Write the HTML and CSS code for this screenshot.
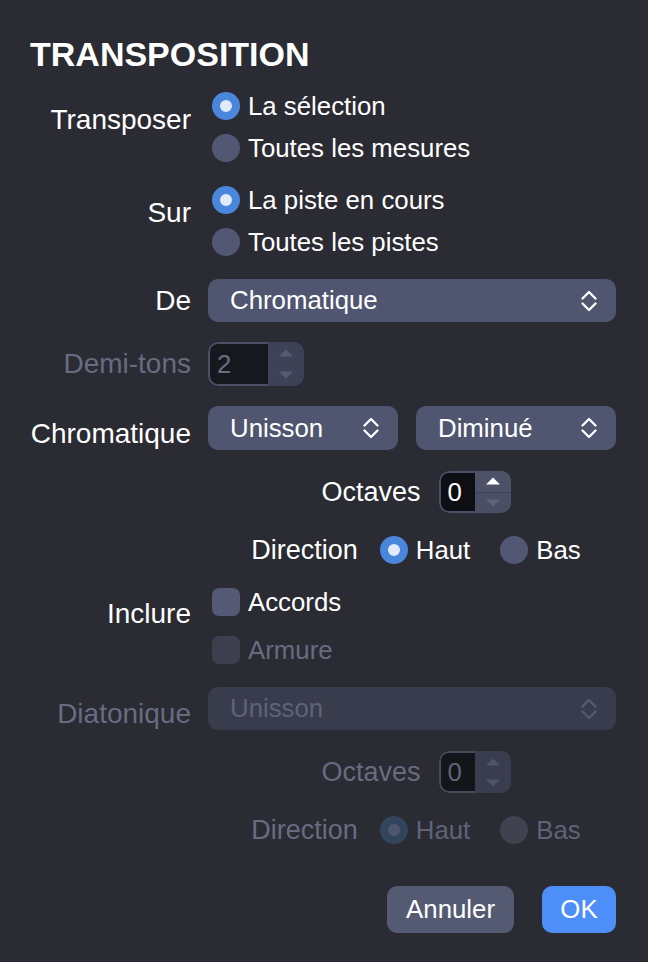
FILE: index.html
```html
<!DOCTYPE html>
<html lang="fr">
<head>
<meta charset="utf-8">
<title>Transposition</title>
<link rel="stylesheet" href="styles.css">
</head>
<body>
<div class="dialog">
  <h1 class="title">TRANSPOSITION</h1>

  <div class="row group g-transposer">
    <div class="label lab-transposer">Transposer</div>
    <div class="ctrl">
      <div class="opt"><span class="radio on"></span><span>La sélection</span></div>
      <div class="opt"><span class="radio"></span><span>Toutes les mesures</span></div>
    </div>
  </div>

  <div class="row group g-sur">
    <div class="label lab-sur">Sur</div>
    <div class="ctrl">
      <div class="opt"><span class="radio on"></span><span>La piste en cours</span></div>
      <div class="opt"><span class="radio"></span><span>Toutes les pistes</span></div>
    </div>
  </div>

  <div class="row centered r-de">
    <div class="label">De</div>
    <div class="ctrl">
      <div class="select">
        <span>Chromatique</span>
        <svg class="chev" width="16" height="26" viewBox="0 0 16 26"><polyline points="1.5,10.5 8,4 14.5,10.5"/><polyline points="1.5,15.5 8,22 14.5,15.5"/></svg>
      </div>
    </div>
  </div>

  <div class="row centered r-demi">
    <div class="label dis">Demi-tons</div>
    <div class="ctrl">
      <div class="stepper st-demi disabled">
        <div class="field">2</div>
        <div class="arrows">
          <span><svg width="16" height="8" viewBox="0 0 16 8"><polygon points="1,7.5 8,0.5 15,7.5"/></svg></span>
          <span><svg width="16" height="8" viewBox="0 0 16 8"><polygon points="1,0.5 8,7.5 15,0.5"/></svg></span>
        </div>
      </div>
    </div>
  </div>

  <div class="row fixed r-chrom">
    <div class="label tall55">Chromatique</div>
    <div class="ctrl pair">
      <div class="select sel-a">
        <span>Unisson</span>
        <svg class="chev" width="16" height="26" viewBox="0 0 16 26"><polyline points="1.5,10.5 8,4 14.5,10.5"/><polyline points="1.5,15.5 8,22 14.5,15.5"/></svg>
      </div>
      <div class="select sel-b">
        <span>Diminué</span>
        <svg class="chev" width="16" height="26" viewBox="0 0 16 26"><polyline points="1.5,10.5 8,4 14.5,10.5"/><polyline points="1.5,15.5 8,22 14.5,15.5"/></svg>
      </div>
    </div>
  </div>

  <div class="sub r-oct1">
    <span class="sublabel oct-label">Octaves</span>
    <div class="stepper st-oct">
      <div class="field">0</div>
      <div class="arrows">
        <span class="up-on"><svg width="16" height="8" viewBox="0 0 16 8"><polygon points="1,7.5 8,0.5 15,7.5"/></svg></span>
        <span class="down-off"><svg width="16" height="8" viewBox="0 0 16 8"><polygon points="1,0.5 8,7.5 15,0.5"/></svg></span>
      </div>
    </div>
  </div>

  <div class="sub r-dir1">
    <span class="sublabel dir-label">Direction</span>
    <div class="opt"><span class="radio on"></span><span>Haut</span></div>
    <div class="opt opt-bas"><span class="radio"></span><span>Bas</span></div>
  </div>

  <div class="row group g-inclure">
    <div class="label lab-inclure">Inclure</div>
    <div class="ctrl">
      <div class="opt chk-row"><span class="check"></span><span>Accords</span></div>
      <div class="opt chk-row dis"><span class="check off"></span><span>Armure</span></div>
    </div>
  </div>

  <div class="row fixed r-diat">
    <div class="label dis tall53">Diatonique</div>
    <div class="ctrl">
      <div class="select disabled">
        <span>Unisson</span>
        <svg class="chev" width="16" height="26" viewBox="0 0 16 26"><polyline points="1.5,10.5 8,4 14.5,10.5"/><polyline points="1.5,15.5 8,22 14.5,15.5"/></svg>
      </div>
    </div>
  </div>

  <div class="sub r-oct2 dis">
    <span class="sublabel oct-label">Octaves</span>
    <div class="stepper st-oct disabled dim">
      <div class="field">0</div>
      <div class="arrows">
        <span><svg width="16" height="8" viewBox="0 0 16 8"><polygon points="1,7.5 8,0.5 15,7.5"/></svg></span>
        <span><svg width="16" height="8" viewBox="0 0 16 8"><polygon points="1,0.5 8,7.5 15,0.5"/></svg></span>
      </div>
    </div>
  </div>

  <div class="sub r-dir2 dis">
    <span class="sublabel dir-label">Direction</span>
    <div class="opt"><span class="radio on off"></span><span>Haut</span></div>
    <div class="opt opt-bas"><span class="radio off"></span><span>Bas</span></div>
  </div>

  <div class="buttons">
    <div class="btn secondary">Annuler</div>
    <div class="btn primary">OK</div>
  </div>
</div>
</body>
</html>
```

FILE: styles.css
```css
html, body {
  margin: 0;
  padding: 0;
}
body {
  background: #2a2b33;
  color: #ffffff;
  font-family: "Liberation Sans", Arial, Helvetica, sans-serif;
}
.dialog {
  width: 648px;
  height: 962px;
  box-sizing: border-box;
  padding: 34px 32px 0 30px;
  overflow: hidden;
}
.title {
  margin: 0;
  font-size: 34px;
  line-height: 40px;
  font-weight: 700;
  letter-spacing: 0;
}

/* generic rows */
.row {
  display: flex;
}
.label {
  flex: none;
  width: 161px;
  margin-right: 17px;
  text-align: right;
  font-size: 28px;
  line-height: 42px;
  white-space: nowrap;
}
.ctrl {
  flex: 1;
  min-width: 0;
}
.dis {
  color: #686c80;
}

.group { align-items: flex-start; }
.centered { align-items: center; }
.fixed { align-items: flex-start; height: 44px; }

.g-transposer { margin-top: 11px; }
.g-sur { margin-top: 10px; }
.r-de { margin-top: 16px; }
.r-demi { margin-top: 20px; }
.r-chrom { margin-top: 20px; }
.r-oct1 { margin-top: 21px; }
.r-dir1 { margin-top: 16px; }
.g-inclure { margin-top: 7px; }
.r-diat { margin-top: 13px; height: 43px; }
.r-oct2 { margin-top: 21px; }
.r-dir2 { margin-top: 16px; }

.lab-transposer { padding-top: 14px; }
.lab-sur { padding-top: 13px; }
.lab-inclure { padding-top: 15px; }
.tall55 { line-height: 55px; }
.tall53 { line-height: 53px; }

/* options: radio / checkbox */
.opt {
  display: flex;
  align-items: center;
  height: 42px;
  font-size: 25.8px;
  white-space: nowrap;
}
.chk-row { height: 48px; }
.radio {
  flex: none;
  box-sizing: border-box;
  width: 28px;
  height: 28px;
  border-radius: 50%;
  background: #525873;
  margin: 0 8px 0 4px;
}
.radio.on {
  border: 8px solid #4a86dc;
  background: #e2e9f7;
}
.radio.off {
  background: #3f424f;
}
.radio.on.off {
  border-color: #33455c;
  background: #4d5870;
}
.check {
  flex: none;
  width: 28px;
  height: 28px;
  border-radius: 7px;
  background: #545a75;
  margin: 0 8px 0 4px;
}
.check.off {
  background: #3c3f4d;
}

/* select popups */
.select {
  box-sizing: border-box;
  height: 43px;
  border-radius: 10px;
  background: #50566f;
  padding: 0 19px 0 22px;
  font-size: 25.8px;
  display: flex;
  align-items: center;
  justify-content: space-between;
  white-space: nowrap;
}
.r-chrom .select { height: 44px; }
.chev polyline {
  fill: none;
  stroke: #ffffff;
  stroke-width: 2.3;
  stroke-linecap: round;
  stroke-linejoin: round;
}
.select.disabled {
  background: #393c4c;
  color: #5f6379;
}
.select.disabled .chev polyline {
  stroke: #575b71;
}
.pair {
  display: flex;
}
.sel-a {
  width: 190px;
  flex: none;
}
.sel-b {
  flex: 1;
  margin-left: 18px;
}

/* steppers */
.stepper {
  display: flex;
  height: 43px;
  border-radius: 10px;
  overflow: hidden;
  flex: none;
}
.st-demi { width: 96px; height: 44px; }
.st-oct { width: 72px; height: 42px; }
.field {
  box-sizing: border-box;
  flex: 1;
  border: 2px solid #4b4f66;
  border-right: none;
  border-radius: 10px 0 0 10px;
  background: #0e0f14;
  font-size: 25.8px;
  display: flex;
  align-items: center;
  padding-left: 7px;
  color: #ffffff;
}
.arrows {
  flex: none;
  width: 36px;
  display: flex;
  flex-direction: column;
  background: #4a4f66;
}
.arrows span {
  flex: 1;
  display: flex;
  align-items: center;
  justify-content: center;
}
.arrows polygon { fill: #575c75; }
.up-on { background: #4d5269; border-bottom: 1px solid #3e4256; }
.up-on polygon { fill: #ffffff; }
.down-off polygon { fill: #5e637c; }
.stepper.disabled .field {
  background: #17181e;
  border-color: #4d5167;
  color: #6a6e84;
}
.stepper.disabled .arrows {
  background: #3e4257;
}
.stepper.disabled .arrows polygon {
  fill: #565b73;
}
.stepper.dim .field {
  background: #141519;
  border-color: #474a5c;
  color: #5f6378;
}
.stepper.dim .arrows { background: #3a3d50; }
.stepper.dim .arrows polygon { fill: #4f546b; }

/* centered sub rows */
.sub {
  display: flex;
  align-items: center;
  justify-content: center;
  margin-left: 186px;
  height: 42px;
}
.sublabel {
  font-size: 27px;
  line-height: 42px;
  white-space: nowrap;
}
.oct-label { margin-right: 18px; }
.dir-label { margin-right: 18px; }
.opt-bas { margin-left: 26px; }
.sub.dis .opt { color: #5f6378; }

/* buttons */
.buttons {
  display: flex;
  justify-content: flex-end;
  gap: 28px;
  margin-top: 35px;
}
.btn {
  box-sizing: border-box;
  height: 47px;
  border-radius: 10px;
  font-size: 25.8px;
  display: flex;
  align-items: center;
  justify-content: center;
  color: #ffffff;
}
.secondary {
  background: #555a73;
  padding: 0 19px;
}
.primary {
  background: #4d8ef8;
  width: 74px;
}
```
